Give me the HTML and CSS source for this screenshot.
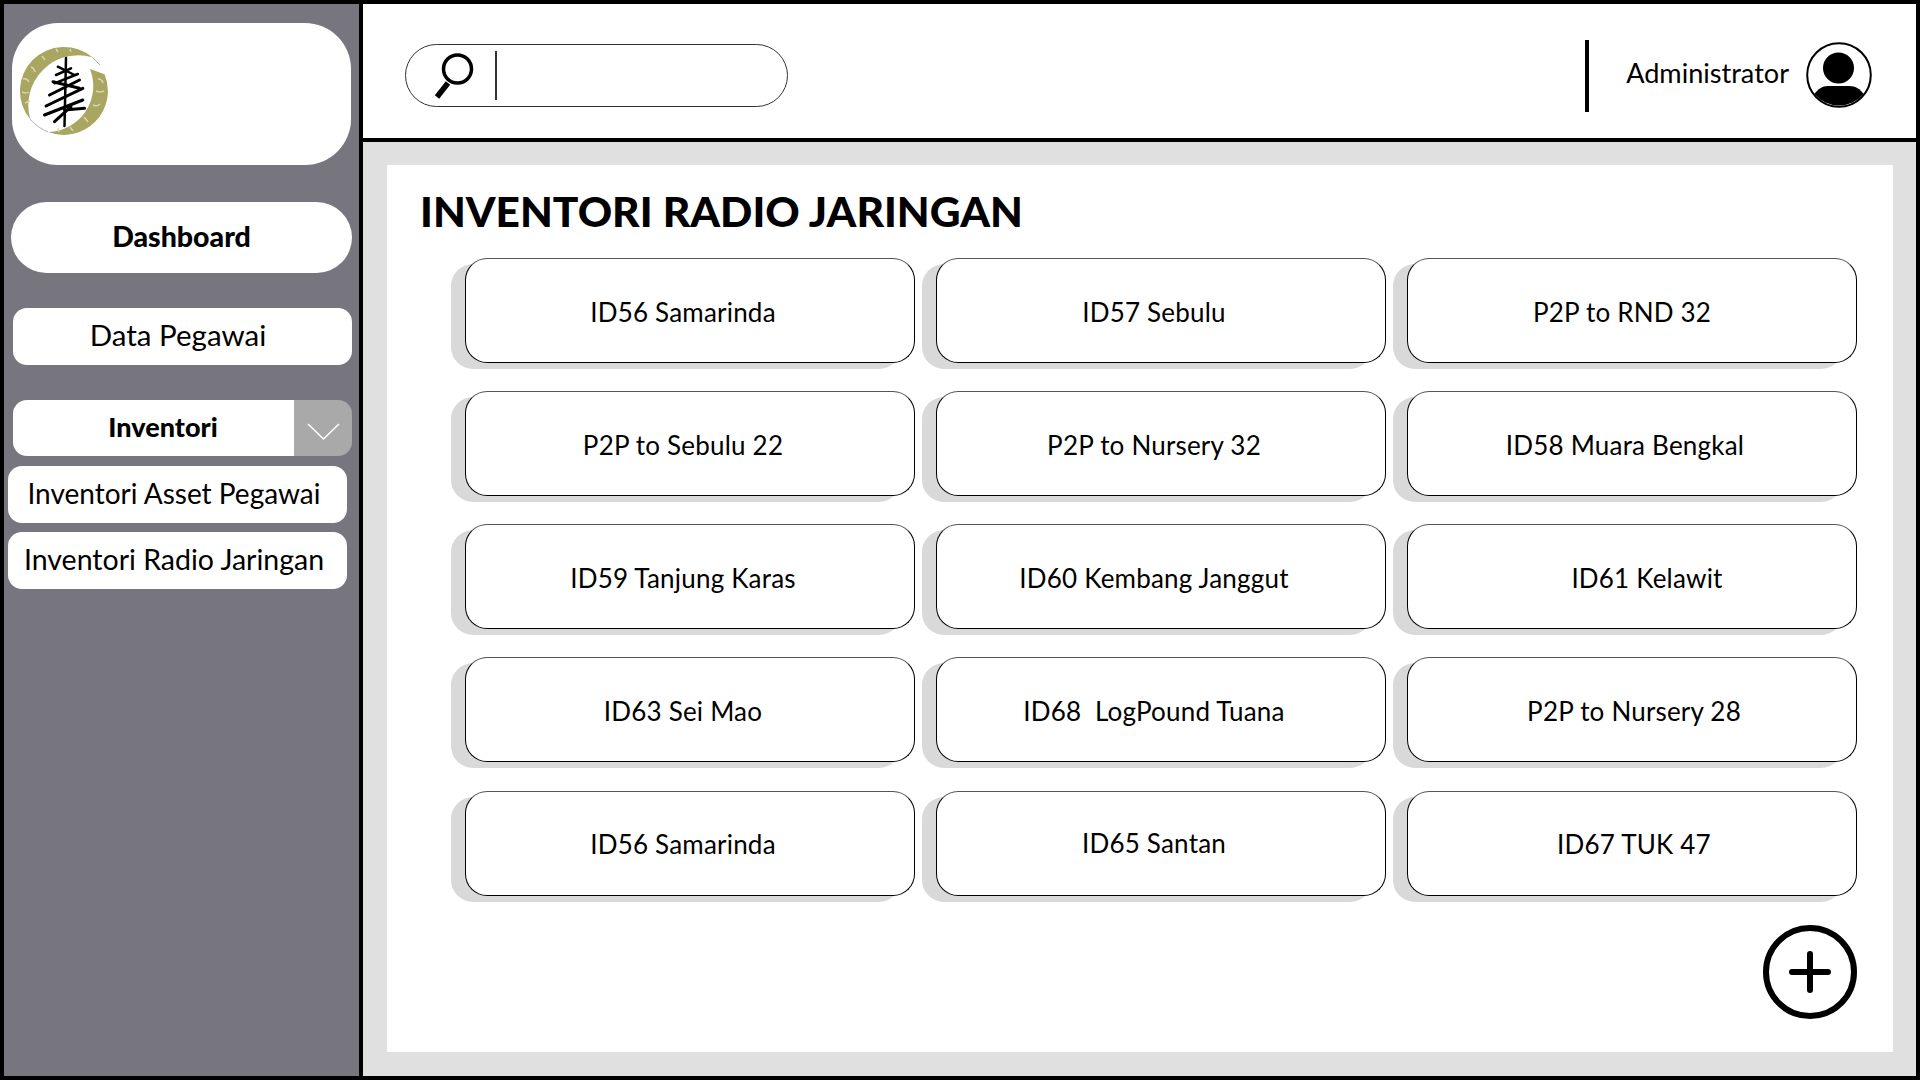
FILE: index.html
```html
<!DOCTYPE html>
<html>

<head>
    <meta charset="UTF-8">
    <title>Inventori Radio Jaringan</title>
    <link rel="stylesheet" href="styles.css">
</head>

<body>
    <div class="frame">
        <aside class="sidebar">
            <div class="logo-card">
                <svg class="logo" width="92" height="92" viewBox="0 0 92 92">
                    <g fill="#a9a662">
                        <path d="M74.300 12.300 A44 44 0 0 0 12.300 74.300 A50 50 0 0 1 74.300 12.300 Z"/>
                        <path d="M86.600 29.200 A44 44 0 0 1 30.200 87 A46 46 0 0 0 72 24 Z"/>
                    </g>
                    <g fill="none" stroke="#b5b5a0" stroke-width="1">
                        <path d="M74.300 12.300 L82 20"/>
                        <path d="M12.300 74.300 Q20 83 30.200 87"/>
                    </g>
                    <g fill="none" stroke="#d8d6a8" stroke-width="1.500">
                        <path d="M5 34 q4 -1 6 3 M4 47 q4 2 7 0 M7 58 l5 -2 M13 22 q3 1 4 5 M24 11 l3 4 M38 4 l2 3 M52 4 l1 3"/>
                        <path d="M80 34 q4 0 5 4 M78 46 q4 2 8 0 M75 60 q4 2 7 -1 M66 72 l4 5 M52 82 l3 4 M40 83 l1 4"/>
                    </g>
                    <g fill="none" stroke="#000" stroke-linecap="round">
                        <path d="M48 13 L46.500 81" stroke-width="2.500"/>
                        <path d="M39.800 21.700 L56.500 30 M38 30 L53 23.300 M36.500 38.300 L59.800 29" stroke-width="2.500"/>
                        <path d="M35 36.700 L61.500 43.300 M31.500 50 L61.500 35 M28 61 L64.800 43.300" stroke-width="3"/>
                        <path d="M26.500 70 L64.800 55 M46.500 65 L66.500 63.300 M36.500 76.700 L53 61.700" stroke-width="3"/>
                    </g>
                </svg>
            </div>
            <div class="nav-item nav-dashboard">Dashboard</div>
            <div class="nav-item nav-plain">Data Pegawai</div>
            <div class="nav-group">
                <div class="nav-group-label">Inventori</div>
                <div class="nav-group-toggle">
                    <svg width="33" height="18" viewBox="0 0 33 18">
                        <path d="M1 1 L16.500 16 L32 1" fill="none" stroke="#fff" stroke-width="1.500"/>
                    </svg>
                </div>
            </div>
            <div class="nav-item nav-sub nav-asset">Inventori Asset Pegawai</div>
            <div class="nav-item nav-sub nav-radio">Inventori Radio Jaringan</div>
        </aside>

        <div class="content">
            <header class="topbar">
                <div class="search">
                    <svg class="search-icon" width="44" height="48" viewBox="0 0 44 48">
                        <circle cx="26.500" cy="17" r="14" fill="none" stroke="#000" stroke-width="3.500"/>
                        <path d="M17 31 L6 45" fill="none" stroke="#000" stroke-width="5.500"/>
                    </svg>
                    <span class="search-caret"></span>
                </div>
                <div class="user">
                    <span class="user-divider"></span>
                    <span class="user-name">Administrator</span>
                    <svg class="user-avatar" width="66" height="66" viewBox="0 0 66 66">
                        <circle cx="33" cy="33" r="31.800" fill="#fff" stroke="#000" stroke-width="2"/>
                        <circle cx="32.500" cy="26" r="15.500" fill="#000"/>
                        <path d="M8.500 52 C12 47 16 44 22 44 L43 44 C50 44 54 47 57.500 52 A31.800 31.800 0 0 1 8.500 52 Z" fill="#000"/>
                    </svg>
                </div>
            </header>

            <main class="main">
                <section class="panel">
                    <h1 class="title">INVENTORI RADIO JARINGAN</h1>
                    <div class="card-grid">
                        <div class="card">ID56 Samarinda</div>
                        <div class="card">ID57 Sebulu</div>
                        <div class="card card-far-left">P2P to RND 32</div>
                        <div class="card">P2P to Sebulu 22</div>
                        <div class="card">P2P to Nursery 32</div>
                        <div class="card">ID58 Muara Bengkal</div>
                        <div class="card">ID59 Tanjung Karas</div>
                        <div class="card">ID60 Kembang Janggut</div>
                        <div class="card card-far-right">ID61 Kelawit</div>
                        <div class="card">ID63 Sei Mao</div>
                        <div class="card">ID68&nbsp; LogPound Tuana</div>
                        <div class="card card-right">P2P to Nursery 28</div>
                        <div class="card">ID56 Samarinda</div>
                        <div class="card card-high">ID65 Santan</div>
                        <div class="card card-right">ID67 TUK 47</div>
                    </div>
                    <button class="add-button">
                        <svg width="94" height="94" viewBox="0 0 94 94">
                            <circle cx="47" cy="47" r="44" fill="#fff" stroke="#000" stroke-width="6"/>
                            <path d="M47 29 V65 M29 47 H65" fill="none" stroke="#000" stroke-width="6" stroke-linecap="round"/>
                        </svg>
                    </button>
                </section>
            </main>
        </div>
    </div>
</body>

</html>
```

FILE: styles.css
```css
* {
    box-sizing: border-box;
}

body {
    margin: 0;
    font-family: Lato, "Open Sans", sans-serif;
    color: #000000;
    background-color: #ffffff;
}

.frame {
    display: flex;
    width: 1920px;
    height: 1080px;
    border: 4px solid #000000;
    overflow: hidden;
}

/* Sidebar */
.sidebar {
    display: flex;
    flex-direction: column;
    flex: 0 0 359px;
    padding-top: 19px;
    background-color: #77767f;
    border-right: 4px solid #000000;
}

.logo-card {
    display: flex;
    align-items: center;
    width: 339px;
    height: 142px;
    margin-left: 8px;
    padding: 0 0 6px 6px;
    background-color: #ffffff;
    border-radius: 46px;
}

.nav-item {
    display: flex;
    align-items: center;
    justify-content: center;
    background-color: #ffffff;
    font-size: 28px;
    font-weight: 400;
}

.nav-dashboard {
    width: 341px;
    height: 71px;
    margin: 37px 0 0 7px;
    padding-bottom: 4px;
    border-radius: 36px;
    font-size: 28.500px;
    font-weight: 900;
}

.nav-plain {
    width: 339px;
    height: 57px;
    margin: 35px 0 0 9px;
    padding: 0 9px 4px 0;
    border-radius: 14px;
    font-size: 29.500px;
}

.nav-group {
    display: flex;
    width: 339px;
    height: 56px;
    margin: 35px 0 0 9px;
    border-radius: 14px;
    overflow: hidden;
}

.nav-group-label {
    display: flex;
    flex: 1;
    align-items: center;
    justify-content: center;
    padding: 0 0 4px 19px;
    background-color: #ffffff;
    font-size: 27px;
    font-weight: 900;
}

.nav-group-toggle {
    display: flex;
    flex: 0 0 58px;
    align-items: flex-end;
    justify-content: center;
    padding: 0 0 15px 1px;
    background-color: #a9a9a9;
}

.nav-sub {
    width: 339px;
    height: 57px;
    margin-left: 4px;
    padding: 0 7px 4px 0;
    border-radius: 14px;
}

.nav-asset {
    margin-top: 10px;
}

.nav-radio {
    margin-top: 9px;
    font-size: 28.500px;
}

/* Top bar */
.content {
    display: flex;
    flex-direction: column;
    flex: 1;
}

.topbar {
    display: flex;
    flex: 0 0 138px;
    align-items: center;
    justify-content: space-between;
    padding: 9px 44px 0 42px;
    border-bottom: 4px solid #000000;
}

.search {
    display: flex;
    align-items: center;
    width: 383px;
    height: 63px;
    padding-left: 25px;
    border: 1.500px solid #333333;
    border-radius: 32px;
}

.search-icon {
    flex: none;
}

.search-caret {
    width: 2px;
    height: 49px;
    margin-left: 20px;
    background-color: #333333;
}

.user {
    display: flex;
    align-items: center;
}

.user-divider {
    width: 4px;
    height: 72px;
    margin-right: 37px;
    background-color: #000000;
}

.user-name {
    padding-bottom: 6px;
    font-size: 27.100px;
    font-weight: 400;
}

.user-avatar {
    margin: 0 0 2px 17px;
}

/* Main panel */
.main {
    display: flex;
    flex: 1;
    padding: 23px 23px 24px 24px;
    background-color: #e0e0e0;
}

.panel {
    display: flex;
    flex-direction: column;
    flex: 1;
    background-color: #ffffff;
}

.title {
    height: 93px;
    margin: 0;
    padding: 21px 0 0 33px;
    font-size: 42.500px;
    font-weight: 900;
    line-height: 50px;
}

.card-grid {
    display: grid;
    grid-template-columns: repeat(3, 450px);
    grid-auto-rows: 105px;
    column-gap: 21px;
    row-gap: 28.150px;
    margin-left: 78px;
}

.card {
    display: flex;
    align-items: center;
    justify-content: center;
    padding: 2px 14px 0 0;
    background-color: #ffffff;
    border: 1.500px solid #000000;
    border-top-color: #555555;
    border-radius: 22px;
    box-shadow: -14px 6px 0 #d9d9d9;
    font-size: 26px;
    font-weight: 400;
    letter-spacing: 0.200px;
}

.card-far-left {
    padding-right: 20px;
}

.card-right {
    padding: 2px 0 0 4px;
}

.card-far-right {
    padding: 2px 0 0 30px;
}

.card-high {
    padding-top: 0;
}

.add-button {
    align-self: flex-end;
    width: 94px;
    height: 94px;
    margin: 29px 36px 0 0;
    padding: 0;
    background: none;
    border: none;
    cursor: pointer;
}
```
